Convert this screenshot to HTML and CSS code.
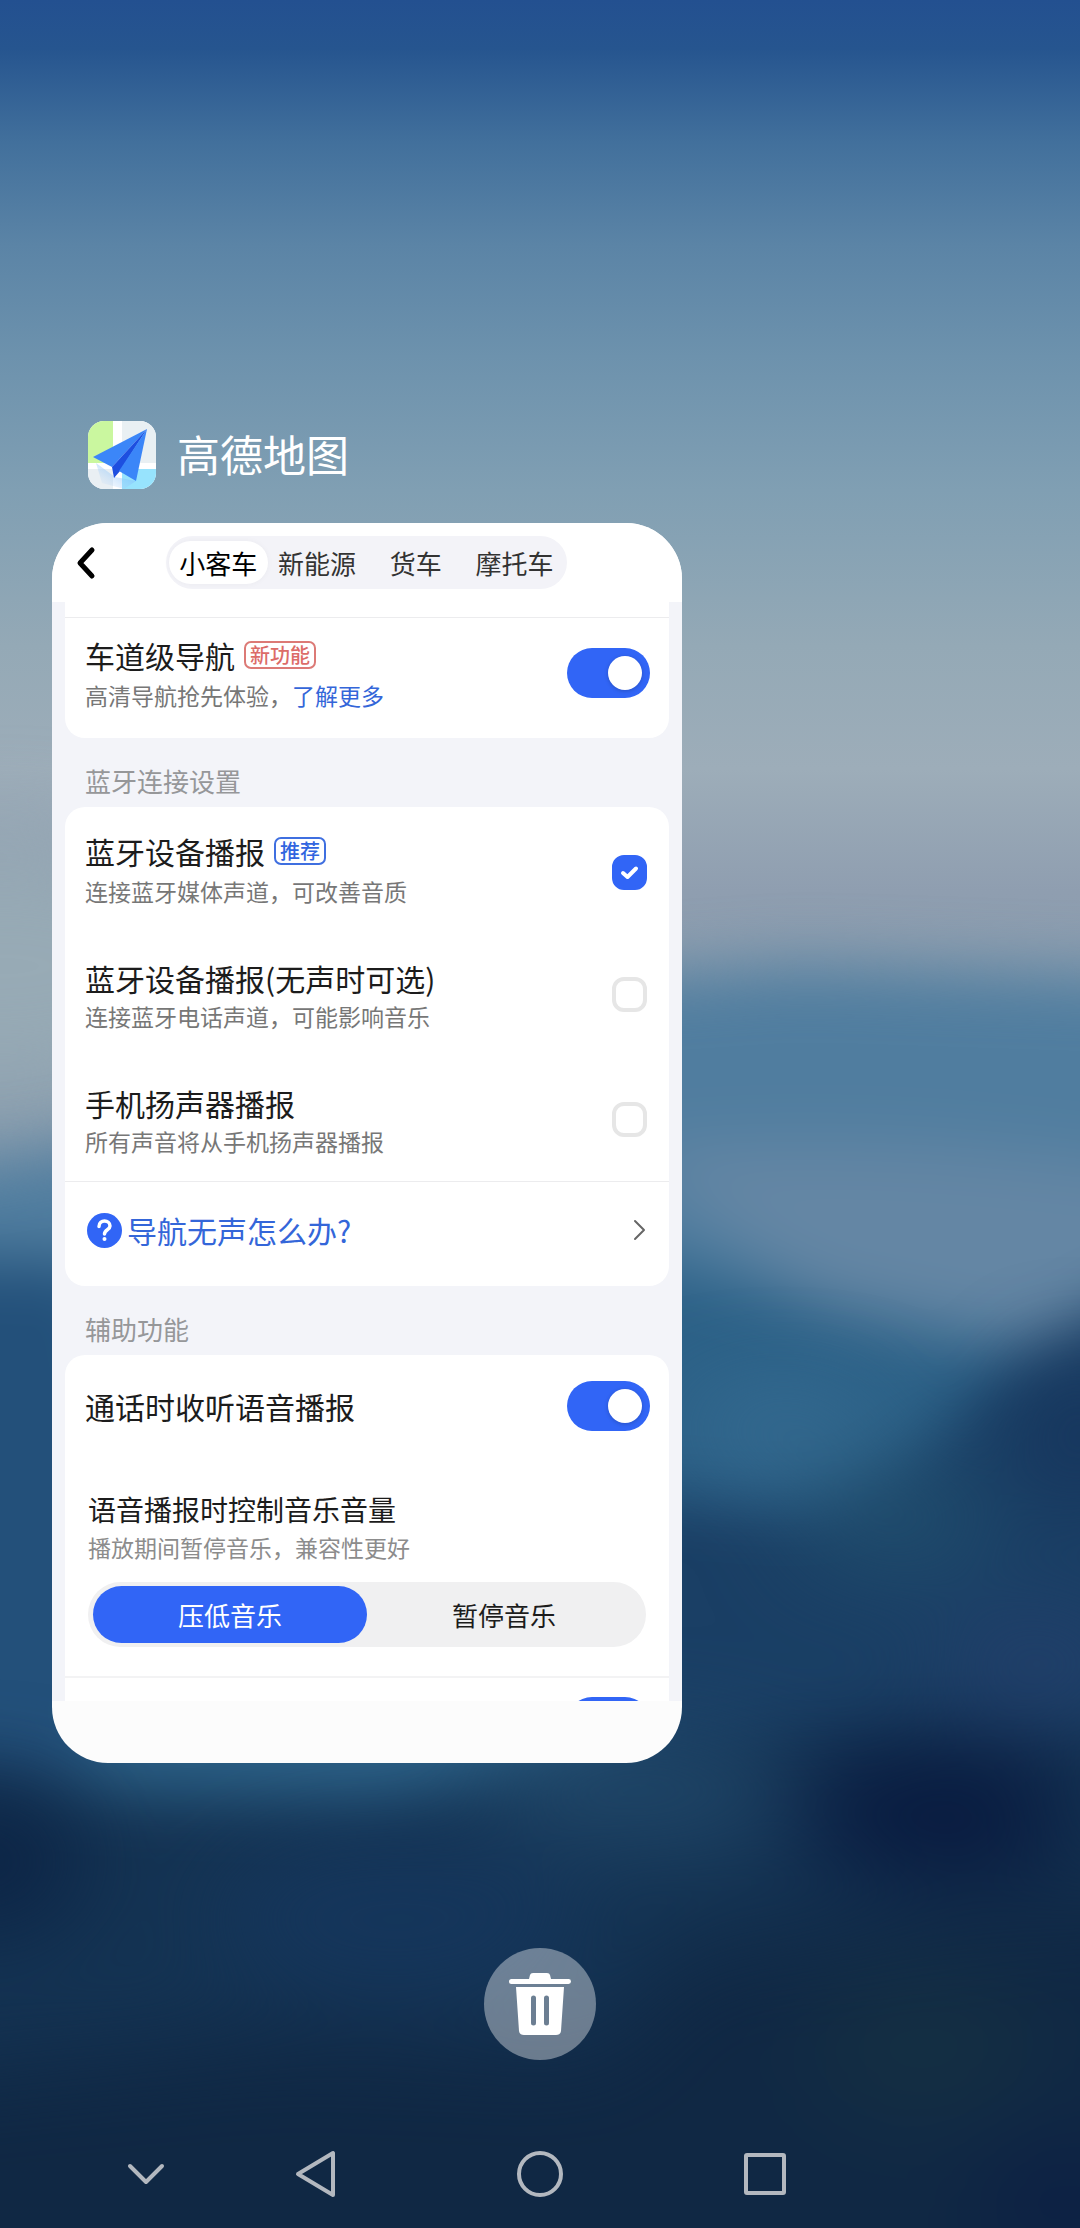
FILE: index.html
```html
<!DOCTYPE html>
<html lang="zh-CN">
<head>
  <meta charset="UTF-8">
  <meta name="viewport" content="width=device-width, initial-scale=1.0">
  <title>最近任务</title>
  <link rel="stylesheet" href="styles.css">
</head>
<body>
  <svg class="wallpaper" viewBox="0 0 760 1568" preserveAspectRatio="none" aria-hidden="true">
    <defs>
      <linearGradient id="sky" x1="0" y1="0" x2="0" y2="1">
        <stop offset="0" stop-color="#235090"/>
        <stop offset="0.022" stop-color="#26558f"/>
        <stop offset="0.064" stop-color="#42709c"/>
        <stop offset="0.11" stop-color="#5b84a6"/>
        <stop offset="0.16" stop-color="#6d92ad"/>
        <stop offset="0.22" stop-color="#809fb3"/>
        <stop offset="0.29" stop-color="#94a9b6"/>
        <stop offset="0.345" stop-color="#9dadb9"/>
        <stop offset="0.4" stop-color="#8f9eb0"/>
        <stop offset="0.45" stop-color="#8a9dae"/>
        <stop offset="1" stop-color="#8a9dae"/>
      </linearGradient>
      <filter id="soft" x="-50%" y="-50%" width="200%" height="200%" color-interpolation-filters="sRGB"><feGaussianBlur stdDeviation="22"/></filter>
      <filter id="wide" x="-80%" y="-80%" width="260%" height="260%" color-interpolation-filters="sRGB"><feGaussianBlur stdDeviation="34"/></filter>
    </defs>
    <rect width="760" height="1568" fill="url(#sky)"/>
    <ellipse cx="0" cy="680" rx="160" ry="90" fill="#97aab5" filter="url(#wide)"/>
    <g filter="url(#soft)">
      <path d="M-100 830 L100 800 L420 690 L560 680 L860 690 L860 1700 L-100 1700Z" fill="#507d9f"/>
      <path d="M440 810 Q620 790 860 830 L860 960 L600 940Z" fill="#6486a4"/>
      <path d="M-100 880 L100 890 L420 875 L600 925 L700 945 L860 960 L860 1700 L-100 1700Z" fill="#2c6187"/>
      <path d="M-100 890 L60 890 L100 1100 L60 1250 L-100 1250Z" fill="#23507a"/>
      <path d="M860 890 Q760 920 690 980 Q620 1060 560 1060 L440 1050 L440 1700 L860 1700Z" fill="#1a3f65"/>
      <path d="M-100 1230 L60 1260 L260 1270 L560 1220 L860 1210 L860 1700 L-100 1700Z" fill="#143353"/>
    </g>
    <g filter="url(#wide)">
      <ellipse cx="550" cy="1005" rx="70" ry="20" fill="#3a7096"/>
      <ellipse cx="760" cy="1010" rx="40" ry="50" fill="#16345c"/>
      <ellipse cx="630" cy="1070" rx="70" ry="30" fill="#21506f"/>
      <ellipse cx="730" cy="1170" rx="70" ry="30" fill="#233f6b"/>
      <ellipse cx="450" cy="1260" rx="110" ry="36" fill="#204769"/>
      <ellipse cx="660" cy="1275" rx="100" ry="44" fill="#08193e"/>
      <ellipse cx="-10" cy="1310" rx="70" ry="50" fill="#0c2445"/>
      <ellipse cx="280" cy="1350" rx="130" ry="50" fill="#15365c"/>
      <path d="M-100 1460 L200 1430 L420 1440 L480 1370 L860 1320 L860 1700 L-100 1700Z" fill="#102844"/>
      <ellipse cx="650" cy="1440" rx="80" ry="50" fill="#142f43"/>
      <ellipse cx="750" cy="1550" rx="60" ry="40" fill="#0c1f44"/>
    </g>
  </svg>

  <main class="recents">
    <div class="app-title">
      <svg class="app-icon" viewBox="0 0 68 68" aria-hidden="true">
        <defs>
          <clipPath id="tile"><rect width="68" height="68" rx="16"/></clipPath>
          <linearGradient id="shade" x1="1" y1="0" x2="0" y2="1">
            <stop offset="0" stop-color="#5fb4ff" stop-opacity="0.9"/>
            <stop offset="1" stop-color="#c9dcf5" stop-opacity="0"/>
          </linearGradient>
        </defs>
        <g clip-path="url(#tile)">
          <rect width="68" height="68" fill="#fff"/>
          <rect width="25" height="42" fill="#caf79f"/>
          <rect x="34" width="34" height="42" fill="#e9f0f3"/>
          <rect y="48" width="25" height="20" fill="#e9eff3"/>
          <rect x="34" y="48" width="34" height="20" fill="#97e3fd"/>
          <path d="M8 42 L27 56 L48 60 L36 68 L14 62Z" fill="url(#shade)"/>
          <path d="M59 8 L5 36 L24 46Z" fill="#3b86f8"/>
          <path d="M59 8 L24 46 L26 57 L32 50Z" fill="#1d4fe0"/>
          <path d="M59 8 L31 50 L48 60Z" fill="#3b86f8"/>
        </g>
      </svg>
      <h1>高德地图</h1>
    </div>

    <section class="card">
      <header class="card-header">
        <button class="back" aria-label="返回">
          <svg width="20" height="34" viewBox="0 0 20 34"><path d="M16 4 L4 17 L16 30" fill="none" stroke="#000" stroke-width="5" stroke-linecap="round" stroke-linejoin="round"/></svg>
        </button>
        <nav class="tabs">
          <button class="tab active">小客车</button>
          <button class="tab">新能源</button>
          <button class="tab">货车</button>
          <button class="tab">摩托车</button>
        </nav>
      </header>

      <div class="list">
        <div class="group group-first">
          <div class="row lane">
            <div class="text">
              <label class="title tagged" for="lane">车道级导航<span class="tag tag-red">新功能</span></label>
              <p class="sub">高清导航抢先体验，<a href="#">了解更多</a></p>
            </div>
            <input type="checkbox" role="switch" class="switch" id="lane" checked>
          </div>
        </div>

        <h2>蓝牙连接设置</h2>
        <div class="group">
          <div class="options">
            <div class="option">
              <div class="text">
                <label class="title tagged" for="bt">蓝牙设备播报<span class="tag">推荐</span></label>
                <p class="sub">连接蓝牙媒体声道，可改善音质</p>
              </div>
              <span class="check check-tagged">
                <input type="checkbox" id="bt" checked>
                <svg viewBox="0 0 35 35"><path d="M11 18 L15.500 22 L24 13.500" fill="none" stroke="#fff" stroke-width="4" stroke-linecap="round" stroke-linejoin="round"/></svg>
              </span>
            </div>
            <div class="option">
              <div class="text">
                <label class="title" for="bt-call">蓝牙设备播报(无声时可选)</label>
                <p class="sub">连接蓝牙电话声道，可能影响音乐</p>
              </div>
              <span class="check"><input type="checkbox" id="bt-call"></span>
            </div>
            <div class="option">
              <div class="text">
                <label class="title" for="speaker">手机扬声器播报</label>
                <p class="sub">所有声音将从手机扬声器播报</p>
              </div>
              <span class="check"><input type="checkbox" id="speaker"></span>
            </div>
          </div>
          <a class="help" href="#">
            <svg width="35" height="35" viewBox="0 0 35 35" aria-hidden="true">
              <circle cx="17.500" cy="17.500" r="17.500" fill="#3165f6"/>
              <path d="M12 13.500 C12 6 23 6.500 23 13 C23 17 17.500 16.500 17.500 21" fill="none" stroke="#fff" stroke-width="3.500" stroke-linecap="round"/>
              <circle cx="17.500" cy="26" r="2" fill="#fff"/>
            </svg>
            <span>导航无声怎么办?</span>
            <svg class="arrow" width="14" height="24" viewBox="0 0 14 24" aria-hidden="true"><path d="M2 3 L11 12 L2 21" fill="none" stroke="#666" stroke-width="2" stroke-linecap="round" stroke-linejoin="round"/></svg>
          </a>
        </div>

        <h2>辅助功能</h2>
        <div class="group group-last">
          <div class="row call">
            <label class="title" for="call">通话时收听语音播报</label>
            <input type="checkbox" role="switch" class="switch" id="call" checked>
          </div>
          <div class="music">
            <h3>语音播报时控制音乐音量</h3>
            <p class="sub">播放期间暂停音乐，兼容性更好</p>
            <div class="segment">
              <button class="active">压低音乐</button>
              <button>暂停音乐</button>
            </div>
          </div>
          <div class="peek">
            <input type="checkbox" role="switch" class="switch" aria-label="更多" checked>
          </div>
        </div>
      </div>
    </section>

    <button class="clear" aria-label="清除全部">
      <svg width="62" height="62" viewBox="0 0 62 62">
        <path d="M20 6 L21 2 Q21.500 0 24 0 L38 0 Q40.500 0 41 2 L42 6 L59.500 6 A2.500 2.500 0 0 1 59.500 11 L2.500 11 A2.500 2.500 0 0 1 2.500 6Z" fill="#fff"/>
        <path fill-rule="evenodd" d="M7 14 L55 14 L52 58 Q51.500 62 47 62 L15 62 Q10.500 62 10 58Z M22 25 V50 A2 2 0 0 0 27 50 V25 A2 2 0 0 0 22 25Z M35 25 V50 A2 2 0 0 0 40 50 V25 A2 2 0 0 0 35 25Z" fill="#fff"/>
      </svg>
    </button>

    <nav class="navbar">
      <button aria-label="收起"><svg width="48" height="48" viewBox="0 0 48 48"><path d="M8 16 L24 32 L40 16"/></svg></button>
      <button aria-label="返回"><svg width="48" height="48" viewBox="0 0 48 48"><path d="M40 3 V45 L5 24Z"/></svg></button>
      <button aria-label="主页"><svg width="48" height="48" viewBox="0 0 48 48"><circle cx="24" cy="24" r="21"/></svg></button>
      <button aria-label="最近任务"><svg width="48" height="48" viewBox="0 0 48 48"><rect x="5" y="5" width="38" height="38" rx="1"/></svg></button>
    </nav>
  </main>
</body>
</html>
```
FILE: styles.css
```css
*{
  box-sizing: border-box;
}
body{
  margin: 0;
  background: #10284a;
  color: #1c1c1c;
  font-family: "Noto Sans CJK SC", sans-serif;
}
h1,h2,h3,p{
  margin: 0;
  font-weight: 400;
}
a{
  color: #3466d9;
  text-decoration: none;
}
button{
  padding: 0;
  border: 0;
  background: transparent;
  color: inherit;
  font-family: inherit;
}
svg{
  display: block;
}
input{
  margin: 0;
  appearance: none;
}
.wallpaper{
  position: absolute;
  inset: 0;
  z-index: -1;
  width: 100%;
  height: 100%;
}
.recents{
  display: flex;
  flex-direction: column;
  min-height: 100vh;
  padding-top: 421px;
}
.app-title{
  display: flex;
  align-items: flex-start;
  gap: 21px;
  height: 68px;
  padding-left: 88px;
}
.app-icon{
  width: 68px;
  height: 68px;
}
.app-title h1{
  color: #fff;
  font-size: 43px;
  line-height: 64px;
}

/* 任务卡片 */
.card{
  width: 58.333%;
  margin: 34px 0 0 52px;
  border-radius: 56px;
  background: #fcfcfc;
  overflow: hidden;
  padding-bottom: 62px;
}
.card-header{
  display: flex;
  align-items: flex-start;
  height: 79px;
  padding: 13px 24px 0;
  background: #fff;
}
.back{
  height: 53px;
}
.tabs{
  display: flex;
  width: 401px;
  height: 53px;
  margin-left: 70px;
  padding: 5px 3px;
  border-radius: 27px;
  background: #f3f3f8;
}
.tab{
  flex: 1;
  border-radius: 22px;
  color: #333;
  font-size: 26px;
  line-height: 40px;
}
.tab.active{
  background: #fff;
  color: #000;
  box-shadow: 0 0 6px rgba(0, 0, 0, .04);
}

.list{
  padding: 0 13px;
  background: #f3f4f9;
}
.group{
  border-radius: 20px;
  background: #fff;
  overflow: hidden;
}
.group-first{
  padding-top: 15px;
  border-radius: 0 0 20px 20px;
}
.group-last{
  border-radius: 20px 20px 0 0;
}
.list h2{
  padding: 17px 20px 0;
  color: #969799;
  font-size: 26px;
  line-height: 52px;
}
.row{
  display: flex;
  align-items: center;
  justify-content: space-between;
  padding: 0 19px 0 20px;
}
.lane{
  height: 121px;
  padding-top: 15px;
  padding-bottom: 25px;
  border-top: 1px solid #ececee;
}
.call{
  height: 102px;
}
.title{
  display: block;
  font-size: 30px;
  line-height: 40px;
}
.tagged{
  display: flex;
  align-items: center;
  gap: 9px;
  line-height: 44px;
}
.tag{
  padding: 0 4px;
  border: 2px solid #3f6fe0;
  border-radius: 7px;
  color: #3165e0;
  font-size: 20px;
  font-weight: 500;
  line-height: 24px;
}
.tag-red{
  border-color: #dc7a76;
  color: #dc6c68;
}
.sub{
  color: #777;
  font-size: 23px;
  line-height: 36px;
}
.switch{
  width: 83px;
  height: 50px;
  padding: 8px;
  border-radius: 25px;
  background: #ddd;
}
.switch::before{
  content: "";
  display: block;
  width: 34px;
  height: 34px;
  border-radius: 50%;
  background: #fff;
  box-shadow: 0 1px 4px rgba(0, 0, 0, .2);
}
.switch:checked{
  background: #3165f6;
}
.switch:checked::before{
  margin-left: auto;
}

.options{
  display: flex;
  flex-direction: column;
  gap: 49px;
  padding: 22px 22px 22px 20px;
}
.option{
  display: flex;
  justify-content: space-between;
}
.check{
  display: grid;
  width: 35px;
  height: 35px;
  margin-top: 19px;
}
.check-tagged{
  margin-top: 26px;
}
.check > *{
  grid-area: 1 / 1;
}
.check input{
  border: 4px solid #e6e6e6;
  border-radius: 12px;
}
.check input:checked{
  border-color: #3165f6;
  background: #3165f6;
}
.check svg{
  pointer-events: none;
}
.help{
  display: flex;
  align-items: center;
  gap: 5px;
  height: 105px;
  padding: 0 22px 8px;
  border-top: 1px solid #ececee;
  font-size: 30px;
  line-height: 40px;
}
.arrow{
  margin-left: auto;
}

.music{
  padding: 32px 23px 29px;
}
.music h3{
  font-size: 28px;
  line-height: 40px;
}
.music .sub{
  color: #8c8c8c;
}
.segment{
  display: flex;
  height: 65px;
  margin-top: 17px;
  padding: 4px 5px;
  border-radius: 33px;
  background: #f0f0f1;
}
.segment button{
  flex: 1;
  border-radius: 29px;
  font-size: 26px;
  line-height: 40px;
}
.segment .active{
  background: #3165f6;
  color: #fff;
}
.peek{
  display: flex;
  justify-content: flex-end;
  height: 25px;
  padding: 19px 19px 0;
  border-top: 2px solid #f3f3f4;
  overflow: hidden;
}
.peek .switch{
  flex-shrink: 0;
}

.clear{
  display: grid;
  place-items: center;
  align-self: center;
  width: 112px;
  height: 112px;
  margin-top: 185px;
  border-radius: 50%;
  background: rgba(255, 255, 255, .38);
}
.navbar{
  display: grid;
  grid-template-columns: 120fr 222fr 224fr 226fr 202fr;
  height: 108px;
  margin-top: auto;
  padding-left: 8%;
}
.navbar button{
  display: grid;
  place-items: center;
}
.navbar svg{
  fill: none;
  stroke: #b3b8bf;
  stroke-width: 4;
  stroke-linecap: round;
  stroke-linejoin: round;
}
```
